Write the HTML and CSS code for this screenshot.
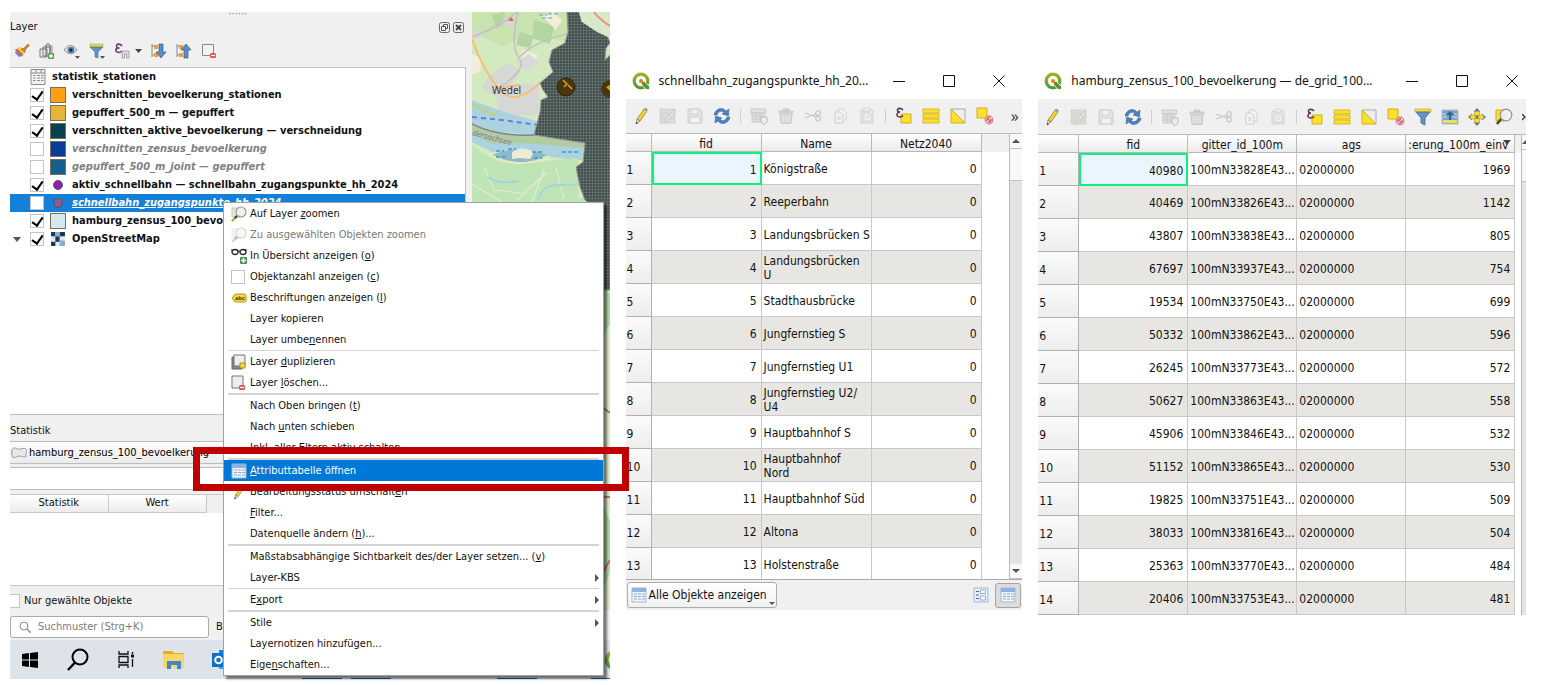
FILE: index.html
```html
<!DOCTYPE html>
<html lang="de">
<head>
<meta charset="utf-8">
<title>QGIS – Attributtabelle öffnen</title>
<link rel="stylesheet" href="styles.css">
</head>
<body>
<svg class="sprite" aria-hidden="true">
  <defs>
    <pattern id="mesh" width="3" height="3" patternUnits="userSpaceOnUse"><rect width="3" height="3" fill="#434f4e"/><path d="M0 0H3M0 0V3" stroke="#73847c" stroke-width="1"/></pattern>
    <linearGradient id="qg" x1="0" y1="0" x2="0" y2="1"><stop offset="0" stop-color="#93b72a"/><stop offset="1" stop-color="#589632"/></linearGradient>
  </defs>
  <symbol id="qgis" viewBox="0 0 18 18"><circle cx="9" cy="9" r="6.800" fill="none" stroke="url(#qg)" stroke-width="3.200"/><path d="M9.500 9.500h3l5 5v3h-3.500l-4.500-5z" fill="#589632" stroke="#fff" stroke-width=".8"/><circle cx="9" cy="9" r="2" fill="#ee7913"/></symbol>
  <symbol id="pencil" viewBox="0 0 18 18"><path d="M5 12 12 2l3 2-7 10z" fill="#efd33c" stroke="#98842a" stroke-width=".8"/><path d="M12 2l1-1.500 3 2-1 1.500z" fill="#999"/><path d="M5 12l3 2-4 3z" fill="#eee0b0" stroke="#777" stroke-width=".7"/><path d="M4 17l.5-2 1.500 1z" fill="#222"/></symbol>
  <symbol id="multi" viewBox="0 0 18 18"><path d="M1 2h15v4H1zM1 7h15v4H1zM1 12h15v4H1z" fill="#d5d5d0" stroke="#c2c2bc" stroke-width=".8"/><path d="M6 14 14 3l2 2-8 10-3 1z" fill="#e5e5e0" stroke="#bbb"/></symbol>
  <symbol id="save" viewBox="0 0 18 18"><path d="M2 2h12l2 2v12H2z" fill="#dedede" stroke="#c4c4c4"/><path d="M5 2h7v5H5zM4 10h10v6H4z" fill="#f2f2f2" stroke="#c8c8c8"/></symbol>
  <symbol id="refresh" viewBox="0 0 18 18"><path d="M1 8C2 2 9-1 13 4l3-2-.5 7L9 7l2-1.500C8 3 5 5 4 8zM17 10c-1 6-8 9-12 4l-3 2 .5-7L9 11l-2 1.500c3 2.500 6 .5 7-2.500z" fill="#4d80bd" stroke="#31639c" stroke-width=".5"/></symbol>
  <symbol id="newcol" viewBox="0 0 18 18"><path d="M1 2h15v4H1zM2 6h12v9H2zM2 9h12M2 12h12M6 6v9M10 6v9" fill="#ddd" stroke="#bbb" stroke-width=".9"/><path d="M11 10h6v5l-3 3-3-3z" fill="#eee" stroke="#aaa"/></symbol>
  <symbol id="trash" viewBox="0 0 18 18"><path d="M2 4h14v2H2zM6 2h6v2H6zM3 7h12l-1 9.500H4z" fill="#d2cccb" stroke="#bdb7b6" stroke-width=".8"/><path d="M6 8v7M9 8v7M12 8v7" stroke="#eee"/></symbol>
  <symbol id="cut" viewBox="0 0 18 18"><path d="M1 6l11 4M1 11l11-4" stroke="#bdbdbd" stroke-width="1.300"/><circle cx="14" cy="6" r="2.300" fill="none" stroke="#bdbdbd" stroke-width="1.300"/><circle cx="14" cy="11.500" r="2.300" fill="none" stroke="#bdbdbd" stroke-width="1.300"/></symbol>
  <symbol id="copy" viewBox="0 0 18 18"><path d="M7 2h5l3 3v8H7z" fill="#f3f3f3" stroke="#ccc"/><path d="M4 5h5l3 3v8H4zM6 10h4M6 12h4" fill="#f3f3f3" stroke="#c4c4c4"/></symbol>
  <symbol id="paste" viewBox="0 0 18 18"><path d="M3 3h12v13H3z" fill="#e0e0e0" stroke="#ccc"/><path d="M6 1h6v3H6zM6 6h4l3 3v5H6zM8 9h3M8 11h3" fill="#f3f3f3" stroke="#ccc"/></symbol>
  <symbol id="exprsel" viewBox="0 0 18 18"><path d="M6 7h10v9H6z" fill="#fbe12c" stroke="#cfae1e"/><path d="M8 3C6 .5 2 1 2.500 3.500c0 1 1.500 1.500 2.500 1.500C3.500 5 1.500 6.500 2 8.500c1 2 4.500 2 6 0" fill="none" stroke="#5d3365" stroke-width="1.600"/></symbol>
  <symbol id="selall" viewBox="0 0 18 18"><path d="M1 2h16v4H1zM1 7h16v4H1zM1 12h16v4H1z" fill="#fbe12c" stroke="#cfae1e" stroke-width=".8"/></symbol>
  <symbol id="invert" viewBox="0 0 18 18"><path d="M2 2h14v14z" fill="#eee" stroke="#aaa"/><path d="M2 2v14h14z" fill="#fbe12c" stroke="#cfae1e"/></symbol>
  <symbol id="desel" viewBox="0 0 18 18"><path d="M1 1h10v10H1z" fill="#fbe12c" stroke="#cfae1e"/><circle cx="13" cy="13" r="4.400" fill="#df6266"/><circle cx="13" cy="13" r="3.200" fill="none" stroke="#f5d0d0" stroke-width=".8"/><path d="M10.500 15.500l5-5" stroke="#fff"/></symbol>
  <symbol id="filter" viewBox="0 0 18 18"><path d="M1 1h16v3H1z" fill="#f0dd4b" stroke="#c6ad2b" stroke-width=".7"/><path d="M2 4h14l-5 6v7l-4-2v-5z" fill="#6592c5" stroke="#41699c" stroke-width=".8"/></symbol>
  <symbol id="moveup" viewBox="0 0 18 18"><path d="M1 2h16v14H1z" fill="#7aa1cc" stroke="#b1bfd0"/><path d="M2 12h14v3H2z" fill="#efdd52"/><path d="M9 3l4 4h-3v5H8V7H5z" fill="#345f91"/><path d="M2 6h3M13 6h3M2 9h4M12 9h4" stroke="#d7e4f2"/></symbol>
  <symbol id="pansel" viewBox="0 0 18 18"><path d="M9 0l3.500 4h-7zM9 18l3.500-4h-7zM0 9l4-3.500v7zM18 9l-4-3.500v7zM7 7h4v4H7z" fill="#4d7cb4"/><path d="M6.500 3.500h5v4h-5zM10.500 7h5v4h-5zM2.500 7h5v4h-5zM6.500 10.500h5v4h-5z" fill="#f6df37" stroke="#b79f22" stroke-width=".6"/></symbol>
  <symbol id="zoomsel" viewBox="0 0 18 18"><path d="M1 2h8v11H1z" fill="#f6df37" stroke="#cfae1e"/><path d="M6 11l-4 5" stroke="#444" stroke-width="2.500"/><circle cx="11" cy="7" r="5.800" fill="#f1f1ee" fill-opacity=".9" stroke="#909090" stroke-width="1.200"/></symbol>
  <symbol id="zoomlayer" viewBox="0 0 16 16"><path d="M1 2h8v9H1z" fill="#e6e6e0" stroke="#c9c9c2"/><path d="M6 10l-5 5" stroke="#c9a23a" stroke-width="2.400"/><path d="M6 10l-2 2" stroke="#444" stroke-width="2.400"/><circle cx="10" cy="6" r="5" fill="#efefec" fill-opacity=".9" stroke="#999" stroke-width="1.200"/></symbol>
  <symbol id="table" viewBox="0 0 16 16"><path d="M1 1h14v14H1z" fill="#eef4fa" stroke="#9db9d8"/><path d="M1 1h14v4H1z" fill="#8db4dc"/><path d="M3 7h3M3 9.500h3M3 12h3M7 7h3M7 9.500h3M7 12h3M11 7h3M11 9.500h3M11 12h3" stroke="#8caccd" stroke-width="1.200"/></symbol>
  <symbol id="tablegrey" viewBox="0 0 16 16"><path d="M1 .5h14v15H1z" fill="#f2f2f2" stroke="#8c8c8c"/><path d="M1 4h14M6 1v3M11 1v3" stroke="#8c8c8c"/><path d="M3 6.500h2.500M3 9h2.500M3 11.500h2.500M7 6.500h3M7 9h3M7 11.500h3M11 6.500h2.500M11 9h2.500M11 11.500h2.500" stroke="#8c8c8c"/></symbol>
  <symbol id="form" viewBox="0 0 16 16"><path d="M1 1h14v14H1z" fill="#e6eef7" stroke="#9db9d8"/><path d="M3 4.500h3M3 8h3M3 11.500h3" stroke="#5a6a7c"/><path d="M7.500 3h5v3.500h-5zM7.500 9h5v4h-5z" fill="#fff" stroke="#8fb2d9"/></symbol>
</svg>
<main class="page">
  <section class="shot">
    <div class="workspace">
      <div class="docks">
        <div class="dockhead">
          <div class="grip">······</div>
          <div class="docktitle"><h2>Layer</h2>
            <button class="dockbtn" aria-label="Abdocken"><svg viewBox="0 0 11 11"><rect x=".5" y=".5" width="10" height="10" rx="2" fill="none" stroke="#666"/><path d="M4.500 4V2.500h4v4H7M2.500 4.500h4v4h-4z" fill="none" stroke="#555"/></svg></button>
            <button class="dockbtn" aria-label="Schließen"><svg viewBox="0 0 11 11"><rect x=".5" y=".5" width="10" height="10" rx="2" fill="none" stroke="#666"/><path d="M3 3l5 5M8 3l-5 5" stroke="#444" stroke-width="1.800"/></svg></button>
          </div>
          <div class="layertools">
            <button aria-label="Layergestaltung"><svg viewBox="0 0 16 16"><path d="M1 7l5-3 5 5-3 4z" fill="#e8a33c"/><path d="M1 7l2-1 6 6-1 1z" fill="#e24b4b"/><path d="M3 5.500L6 4l5 5-1 2z" fill="#f5d040"/><path d="M1 10l4 4 3-1-6-5z" fill="#5a8fd0"/><path d="M7 6l3-1 4-4 1.500 1.500-4 4-.5 3z" fill="#c8843a" stroke="#99612a" stroke-width=".5"/></svg></button>
            <button aria-label="Gruppe hinzufügen"><svg viewBox="0 0 16 16"><path d="M1 6h7v8H1zM4 4h7v9H4z" fill="#eee" stroke="#777"/><path d="M7 12V3c0-3 4-3 4 0v7" fill="none" stroke="#4b6a80"/><path d="M6 3h7v9H6" fill="none" stroke="#888"/><rect x="9" y="10" width="6" height="6" rx="1" fill="#5d9b66"/><path d="M12 11v4M10 13h4" stroke="#fff" stroke-width="1.400"/></svg></button>
            <button aria-label="Kartenthemen"><svg viewBox="0 0 16 16"><path d="M0 7c4-6 9-6 13 0-4 5-9 5-13 0z" fill="#d9dde0" stroke="#999"/><circle cx="7" cy="7" r="3.300" fill="#4b7eb5"/><circle cx="7" cy="7" r="1.500" fill="#222"/><path d="M11 13h5l-2.500 3z" fill="#555"/></svg></button>
            <button aria-label="Legende filtern"><svg viewBox="0 0 16 16"><path d="M1 1h13v3H1z" fill="#e8dc4b" stroke="#b9a736" stroke-width=".6"/><path d="M1 4h13l-5 5v6l-3-1V9z" fill="#6592c5" stroke="#41699c" stroke-width=".6"/><path d="M11 13h5l-2.500 3z" fill="#555"/></svg></button>
            <button class="wide" aria-label="Nach Ausdruck filtern"><svg viewBox="0 0 28 16"><path d="M8 3C6 0 2 1 2.500 3c0 1.500 1.500 2 3 2C3 5 1 6 2 8s4 2 6 0" fill="none" stroke="#6a3c74" stroke-width="1.600"/><path d="M8 8h7v7h-2.500v-4h-2v4H8z" fill="#ddd" stroke="#999" stroke-width=".8"/><path d="M21 6h7l-3.500 4z" fill="#444"/></svg></button>
            <button aria-label="Alle ausklappen"><svg viewBox="0 0 16 16"><path d="M1 1v13M1 3h3M1 12h3" stroke="#888"/><rect x="3" y="2" width="4" height="4" fill="#f0a030"/><rect x="3" y="10" width="4" height="4" fill="#f0a030"/><path d="M8 1h4v8h3l-5 6-5-6h3z" fill="#5b8cc2" stroke="#345f91" stroke-width=".7"/></svg></button>
            <button aria-label="Alle einklappen"><svg viewBox="0 0 16 16"><path d="M1 1v13M1 3h3M1 12h3" stroke="#888"/><rect x="3" y="2" width="4" height="4" fill="#f0a030"/><rect x="3" y="10" width="4" height="4" fill="#f0a030"/><path d="M8 15h4V7h3l-5-6-5 6h3z" fill="#5b8cc2" stroke="#345f91" stroke-width=".7"/></svg></button>
            <button aria-label="Layer löschen"><svg viewBox="0 0 16 16"><path d="M1.500 1.500h11v11h-11z" fill="#f1f1f1" stroke="#888"/><rect x="9" y="10" width="6" height="5" rx="1.500" fill="#e2505a"/><path d="M10 12.500h4" stroke="#fff" stroke-width="1.200"/></svg></button>
          </div>
        </div>
        <ul class="layers">
          <li class="tablelayer"><svg class="sw"><use href="#tablegrey"/></svg><span>statistik_stationen</span></li>
          <li><input type="checkbox" id="l1" checked><i class="sw" style="background:#ff9e17"></i><label for="l1">verschnitten_bevoelkerung_stationen</label></li>
          <li><input type="checkbox" id="l2" checked><i class="sw" style="background:#e5b636"></i><label for="l2">gepuffert_500_m — gepuffert</label></li>
          <li><input type="checkbox" id="l3" checked><i class="sw" style="background:#08424f"></i><label for="l3">verschnitten_aktive_bevoelkerung — verschneidung</label></li>
          <li class="off"><input type="checkbox" id="l4"><i class="sw" style="background:#0a3c9a"></i><label for="l4">verschnitten_zensus_bevoelkerung</label></li>
          <li class="off"><input type="checkbox" id="l5"><i class="sw" style="background:#155f89"></i><label for="l5">gepuffert_500_m_joint — gepuffert</label></li>
          <li><input type="checkbox" id="l6" checked><i class="sw dot" style="background:#8f1fb3"></i><label for="l6">aktiv_schnellbahn — schnellbahn_zugangspunkte_hh_2024</label></li>
          <li class="selected"><input type="checkbox" id="l7"><i class="sw dot" style="background:#8d5a99"></i><label for="l7">schnellbahn_zugangspunkte_hh_2024</label></li>
          <li><input type="checkbox" id="l8" checked><i class="sw" style="background:#d5e8eb"></i><label for="l8">hamburg_zensus_100_bevoelkerung</label></li>
          <li class="group"><svg class="twist" viewBox="0 0 8 5"><path d="M0 0h8L4 5z" fill="#555"/></svg><input type="checkbox" id="l9" checked><svg class="sw" viewBox="0 0 15 15"><path d="M1 1h13v13H1z" fill="#dfe6ee"/><path d="M1 1h4v4H1zM9 1h5v4H9zM5 5h4v5H5zM1 10h4v4H1z" fill="#1d3557"/><path d="M5 1h4v4H5zM9 9h5v5H9z" fill="#8faccb"/></svg><label for="l9">OpenStreetMap</label></li>
        </ul>
        <div class="stats">
          <h2>Statistik</h2>
          <div class="combo"><svg viewBox="0 0 16 12"><path d="M1 3c1-3 4-2 6-1s6-2 8 0-1 5 0 7-5 0-7 0-4 3-6 1-1-4-1-7z" fill="#e7e7e7" stroke="#999"/></svg><select aria-label="Layer für Statistik"><option>hamburg_zensus_100_bevoelkerung — de_grid_100m</option></select></div>
          <input class="expr" type="text" aria-label="Ausdruck">
          <table class="statgrid"><thead><tr><th>Statistik</th><th>Wert</th></tr></thead></table>
          <div class="only"><input type="checkbox" id="only"><label for="only">Nur gewählte Objekte</label></div>
        </div>
      </div>
      <div class="splitter"></div>
      <svg class="map" viewBox="0 0 138 598" preserveAspectRatio="xMinYMin slice">
        <rect width="138" height="598" fill="#d3e9bf"/>
        <path d="M0 0h95v31L60 20 30 34 0 20z" fill="#c8e3ae"/>
        <path d="M20 3l12-3 4 12-12 4zM48 20l14 4-4 12-14-3zM62 8l20 6-4 18-18-6z" fill="#b3d5a0"/>
        <path d="M70 4l12-4 8 8-6 10zM50 37l16 6-3 10-16-5zM0 42l10 4-2 14-8 2z" fill="#f0eed8"/>
        <path d="M32 5l13 2-3 8-12-2zM0 17l10 3-3 7-7-2zM22 60l14-9 12 8-8 13 22 0 5 6-1 24-16 1-22 2-4-20-14-9 6-10z" fill="#d7d7d5"/>
        <path d="M43 50l14-8 10 8-12 9z" fill="#d9d9d8"/>
        <path d="M0 25Q18 18 28 12T45 0M46 0Q38 35 47 46T28 75M95 22Q60 30 47 46" fill="none" stroke="#c5bfc4" stroke-width="1.500"/>
        <path d="M0 27Q10 56 26 76T68 71M28 76l20-3" fill="none" stroke="#f6bd76" stroke-width="2"/>
        <path d="M36 9l3-4 3 4z" fill="#d17238"/>
        <path d="M67 3h8M76 2h10M70 6h12" stroke="#5aa3d8" stroke-width="1" stroke-dasharray="4 2"/>
        <path d="M0 88Q25 98 46 104L68 110 62 123 25 120 0 112z" fill="#aad3df"/>
        <path d="M0 92Q14 100 24 104" stroke="#b8d39a" stroke-width="4" fill="none"/>
        <path d="M0 105l30 3 36 5" fill="none" stroke="#6d79e8" stroke-width="2" stroke-dasharray="5 4"/>
        <path d="M0 112Q30 127 60 122L112 131 110 148Q80 146 66 142T20 140L0 130z" fill="#aad3df"/>
        <path d="M0 112Q26 125 62 123l50 8v5l-35-3-30-2L20 132 0 122z" fill="#b0cda0"/>
        <path d="M0 112Q26 125 62 123" fill="none" stroke="#84828b" stroke-width="1.500"/>
        <path d="M20 143Q45 132 75 143 60 153 32 149z" fill="#8eb9c8"/><path d="M40 140q10-7 22 0l-4 7-10-1-8 1z" fill="#eeead5"/>
        <path d="M15 140Q40 158 76 147" fill="none" stroke="#e8e9c6" stroke-width="2"/>
        <path d="M24 139h8M36 137h8M60 140h10M24 145h10M62 146h8M90 140h18" stroke="#4598cf" stroke-width="1.500" stroke-dasharray="4 2"/>
        <path d="M0 133Q25 155 50 152t56-6v40h32v24H0z" fill="#bfe4b5"/>
        <path d="M12 155l10 23 28 3M0 172l30 18M45 188l30-28M60 190l12-33M84 156l8 30" fill="none" stroke="#e0edd0" stroke-width="1.200"/>
        <path d="M15 165q12 8 32 4M66 188q4-16 24-15t18-5" fill="none" stroke="#a0d4db" stroke-width="1.800"/>
        <path d="M0 260h138v338H0z" fill="#d9ebca"/><path d="M128 272l10 10v30l-6 10zM130 490l8 20v50l-8 20z" fill="#b0d9a0"/><path d="M128 485h10M130 395l8 6M130 562l8-14" stroke="#d2637b" stroke-width="2"/>
        <path d="M95 0 96 20 93 31 80 38 77 50 81 60 68 71 71 78 76 85 69 88 68 100 62 123 113 131 111 150 104 155 108 175 113 188 123 196V278H138V43L133 48 134 36 138 31 135 23 125 18 118 13 110 10 107 0z" fill="url(#mesh)" stroke="#9a8d98"/>
        <path d="M107 0 110 10 125 20 138 26V0z" fill="#d8e8c8"/><path d="M122 0q6 8 16 14" fill="none" stroke="#ee8f82" stroke-width="2"/>
        <circle cx="94" cy="75" r="9" fill="#4b360f" stroke="#2b220f"/><path d="M91 68l4 4-3 3M96 73l4 4" stroke="#e0a020" stroke-width="1.500" fill="none"/>
        <path d="M138 68a9 9 0 0 0 0 18z" fill="#4b360f"/><path d="M134 75l4-2v6z" fill="#e0a020"/>
        <text x="20" y="82" class="town">Wedel</text>
        <text x="0" y="123" class="region" transform="rotate(15 0 123)">dersachsen</text>
      </svg>
    </div>
    <div class="statusbar"><label class="search"><svg viewBox="0 0 12 12"><circle cx="5" cy="5" r="4" fill="none" stroke="#888"/><path d="M8 8l4 4" stroke="#888" stroke-width="1.300"/></svg><input type="search" placeholder="Suchmuster (Strg+K)" aria-label="Suchmuster"></label><span>B</span></div>
    <div class="taskbar">
      <button aria-label="Start"><svg viewBox="0 0 24 24"><path d="M4 6l7-1v6.500H4zM12 5l8-1v7.500h-8zM4 12.500h7V19l-7-1zM12 12.500h8V20l-8-1z" fill="#000"/></svg></button>
      <button aria-label="Suche"><svg viewBox="0 0 24 24"><circle cx="14" cy="9" r="7.500" fill="none" stroke="#000" stroke-width="2"/><path d="M9 14.500 2 22" stroke="#000" stroke-width="2.400"/></svg></button>
      <button aria-label="Aktive Anwendungen"><svg viewBox="0 0 24 24"><path d="M5 3v3h9V3M5 20v-3h9v3M5 8.500h9v6H5zM18.500 4v2M18.500 11v8" fill="none" stroke="#111" stroke-width="1.300"/><path d="M17 6.500h3v3h-3z" fill="#111"/></svg></button>
      <button aria-label="Explorer"><svg viewBox="0 0 24 24"><path d="M1 3h9l2 2h10v15H1z" fill="#e9a820"/><path d="M1 6h21v14H1z" fill="#fbd663"/><path d="M5 13h14v8h-4v-4h-6v4H5z" fill="#3b8ad0"/></svg></button>
      <button aria-label="Outlook"><svg viewBox="0 0 24 24"><path d="M9 2h12v16H9z" fill="#1a86d9"/><path d="M9 12h14v9H9z" fill="#38aee8"/><path d="M2 5h13v14H2z" fill="#0b72c8"/><circle cx="8.500" cy="12" r="3.300" fill="none" stroke="#fff" stroke-width="2"/></svg></button>
      <div class="running"><i></i><i></i><i></i><i></i></div>
      <svg class="taskqgis"><use href="#qgis"/></svg>
    </div>
    <ul class="menu" role="menu">
      <li><svg><use href="#zoomlayer"/></svg><span>Auf Layer <u>z</u>oomen</span></li>
      <li class="disabled"><svg><use href="#zoomlayer"/></svg><span>Zu aus<u>g</u>ewählten Objekten zoomen</span></li>
      <li><svg viewBox="0 0 16 16"><path d="M0 2h2M14 2h2" stroke="#222"/><ellipse cx="4" cy="4" rx="3" ry="2.500" fill="none" stroke="#222" stroke-width="1.300"/><ellipse cx="12" cy="4" rx="3" ry="2.500" fill="none" stroke="#222" stroke-width="1.300"/><path d="M7 3h2" stroke="#222"/><rect x="9" y="9" width="7" height="7" rx="1" fill="#4c9058"/><path d="M12.500 10v5M10 12.500h5" stroke="#fff" stroke-width="1.500"/></svg><span>In Übersicht anzeigen (<u>o</u>)</span></li>
      <li><input type="checkbox" id="m1"><label for="m1">Objektanzahl anzeigen (<u>c</u>)</label></li>
      <li><svg viewBox="0 0 16 16"><path d="M1 8l3-4h10l1 1v6l-1 1H4z" fill="#f2d83a" stroke="#b69d28"/><text x="4" y="10" class="abc">abc</text></svg><span>Beschriftungen anzeigen (<u>l</u>)</span></li>
      <li><span>Layer kopieren</span></li>
      <li><span>Layer umbe<u>n</u>ennen</span></li>
      <li class="sep thin" role="separator"></li>
      <li><svg viewBox="0 0 16 16"><path d="M1 3h10v12H1z" fill="#888" stroke="#666"/><path d="M3 1h11v11H3z" fill="#eee" stroke="#777"/><path d="M9 9h5v5H9z" fill="#f2d83a" stroke="#a78f28"/></svg><span>Layer <u>d</u>uplizieren</span></li>
      <li><svg viewBox="0 0 16 16"><path d="M1 1h11v12H1z" fill="#eee" stroke="#777"/><rect x="8" y="10" width="6" height="5" rx="1.500" fill="#e2505a"/><path d="M9 12.500h4" stroke="#fff" stroke-width="1.200"/></svg><span>Layer <u>l</u>öschen...</span></li>
      <li class="sep" role="separator"></li>
      <li><span>Nach Oben bringen (<u>t</u>)</span></li>
      <li><span>Nach <u>u</u>nten schieben</span></li>
      <li><span>Inkl. aller Eltern aktiv schalten</span></li>
      <li class="sep" role="separator"></li>
      <li class="active"><svg><use href="#table"/></svg><span><u>A</u>ttributtabelle öffnen</span></li>
      <li><svg><use href="#pencil"/></svg><span>Bearbeitungsstatus umschalt<u>e</u>n</span></li>
      <li><span><u>F</u>ilter...</span></li>
      <li><span>Datenquelle ändern (<u>h</u>)...</span></li>
      <li class="sep" role="separator"></li>
      <li><span>Maßstabsabhängige Sichtbarkeit des/der Layer setzen... (<u>v</u>)</span></li>
      <li class="sub"><span>Layer-KBS</span></li>
      <li class="sep thin" role="separator"></li>
      <li class="sub"><span>E<u>x</u>port</span></li>
      <li class="sep" role="separator"></li>
      <li class="sub"><span>Stile</span></li>
      <li><span>Layernotizen hinzufügen...</span></li>
      <li><span>Eige<u>n</u>schaften...</span></li>
    </ul>
    <div class="marker"></div>
  </section>

  <section class="window first">
    <header class="titlebar"><svg class="logo"><use href="#qgis"/></svg><h1>schnellbahn_zugangspunkte_hh_20...</h1>
      <button aria-label="Minimieren"><svg viewBox="0 0 12 12"><path d="M0 6.500h12" stroke="#111"/></svg></button><button aria-label="Maximieren"><svg viewBox="0 0 12 12"><path d="M.5.5h11v11H.5z" fill="none" stroke="#111"/></svg></button><button aria-label="Schließen"><svg viewBox="0 0 12 12"><path d="M.5.5l11 11M11.500.5l-11 11" stroke="#111"/></svg></button></header>
    <div class="toolbar">
      <button aria-label="Bearbeiten"><svg><use href="#pencil"/></svg></button><button disabled aria-label="Mehrfachbearbeitung"><svg><use href="#multi"/></svg></button><button disabled aria-label="Speichern"><svg><use href="#save"/></svg></button><button aria-label="Neu laden"><svg><use href="#refresh"/></svg></button><i></i>
      <button disabled aria-label="Objekt hinzufügen"><svg><use href="#newcol"/></svg></button><button disabled aria-label="Löschen"><svg><use href="#trash"/></svg></button><button disabled aria-label="Ausschneiden"><svg><use href="#cut"/></svg></button><button disabled aria-label="Kopieren"><svg><use href="#copy"/></svg></button><button disabled aria-label="Einfügen"><svg><use href="#paste"/></svg></button><i></i>
      <button aria-label="Nach Ausdruck wählen"><svg><use href="#exprsel"/></svg></button><button aria-label="Alles wählen"><svg><use href="#selall"/></svg></button><button aria-label="Auswahl umkehren"><svg><use href="#invert"/></svg></button><button aria-label="Auswahl aufheben"><svg><use href="#desel"/></svg></button>
      <button class="more" aria-label="Mehr">»</button>
    </div>
    <div class="gridarea">
      <table class="grid">
        <colgroup><col class="n1"><col class="c"><col class="c"><col class="c"><col></colgroup>
        <thead><tr><th></th><th>fid</th><th>Name</th><th>Netz2040</th><td class="rest"></td></tr></thead>
        <tbody>
          <tr><th>1</th><td class="num cur">1</td><td>Königstraße</td><td class="num">0</td><td class="rest"></td></tr>
          <tr><th>2</th><td class="num">2</td><td>Reeperbahn</td><td class="num">0</td><td class="rest"></td></tr>
          <tr><th>3</th><td class="num">3</td><td>Landungsbrücken S</td><td class="num">0</td><td class="rest"></td></tr>
          <tr><th>4</th><td class="num">4</td><td>Landungsbrücken<br>U</td><td class="num">0</td><td class="rest"></td></tr>
          <tr><th>5</th><td class="num">5</td><td>Stadthausbrücke</td><td class="num">0</td><td class="rest"></td></tr>
          <tr><th>6</th><td class="num">6</td><td>Jungfernstieg S</td><td class="num">0</td><td class="rest"></td></tr>
          <tr><th>7</th><td class="num">7</td><td>Jungfernstieg U1</td><td class="num">0</td><td class="rest"></td></tr>
          <tr><th>8</th><td class="num">8</td><td>Jungfernstieg U2/<br>U4</td><td class="num">0</td><td class="rest"></td></tr>
          <tr><th>9</th><td class="num">9</td><td>Hauptbahnhof S</td><td class="num">0</td><td class="rest"></td></tr>
          <tr><th>10</th><td class="num">10</td><td>Hauptbahnhof<br>Nord</td><td class="num">0</td><td class="rest"></td></tr>
          <tr><th>11</th><td class="num">11</td><td>Hauptbahnhof Süd</td><td class="num">0</td><td class="rest"></td></tr>
          <tr><th>12</th><td class="num">12</td><td>Altona</td><td class="num">0</td><td class="rest"></td></tr>
          <tr><th>13</th><td class="num">13</td><td>Holstenstraße</td><td class="num">0</td><td class="rest"></td></tr>
        </tbody>
      </table>
      <div class="scroll"><span class="up"></span><span class="thumb"></span><span class="down"></span></div>
    </div>
    <footer class="viewbar"><button class="showall"><svg><use href="#table"/></svg>Alle Objekte anzeigen<span></span></button><button class="view" aria-label="Formularansicht"><svg><use href="#form"/></svg></button><button class="view on" aria-label="Tabellenansicht"><svg><use href="#table"/></svg></button></footer>
  </section>

  <section class="window second">
    <header class="titlebar"><svg class="logo"><use href="#qgis"/></svg><h1>hamburg_zensus_100_bevoelkerung — de_grid_100...</h1>
      <button aria-label="Minimieren"><svg viewBox="0 0 12 12"><path d="M0 6.500h12" stroke="#111"/></svg></button><button aria-label="Maximieren"><svg viewBox="0 0 12 12"><path d="M.5.5h11v11H.5z" fill="none" stroke="#111"/></svg></button><button aria-label="Schließen"><svg viewBox="0 0 12 12"><path d="M.5.5l11 11M11.500.5l-11 11" stroke="#111"/></svg></button></header>
    <div class="toolbar">
      <button aria-label="Bearbeiten"><svg><use href="#pencil"/></svg></button><button disabled aria-label="Mehrfachbearbeitung"><svg><use href="#multi"/></svg></button><button disabled aria-label="Speichern"><svg><use href="#save"/></svg></button><button aria-label="Neu laden"><svg><use href="#refresh"/></svg></button><i></i>
      <button disabled aria-label="Objekt hinzufügen"><svg><use href="#newcol"/></svg></button><button disabled aria-label="Löschen"><svg><use href="#trash"/></svg></button><button disabled aria-label="Ausschneiden"><svg><use href="#cut"/></svg></button><button disabled aria-label="Kopieren"><svg><use href="#copy"/></svg></button><button disabled aria-label="Einfügen"><svg><use href="#paste"/></svg></button><i></i>
      <button aria-label="Nach Ausdruck wählen"><svg><use href="#exprsel"/></svg></button><button aria-label="Alles wählen"><svg><use href="#selall"/></svg></button><button aria-label="Auswahl umkehren"><svg><use href="#invert"/></svg></button><button aria-label="Auswahl aufheben"><svg><use href="#desel"/></svg></button><button aria-label="Filtern"><svg><use href="#filter"/></svg></button><button aria-label="Auswahl nach oben"><svg><use href="#moveup"/></svg></button><button aria-label="Zur Auswahl verschieben"><svg><use href="#pansel"/></svg></button><button aria-label="Zur Auswahl zoomen"><svg><use href="#zoomsel"/></svg></button>
      <button class="overflow" aria-label="Mehr"><svg viewBox="0 0 4 8"><path d="M0 1l3 3-3 3" fill="none" stroke="#333" stroke-width="1.300"/></svg></button>
    </div>
    <div class="gridarea">
      <table class="grid">
        <colgroup><col class="n2"><col class="c"><col class="c"><col class="c"><col class="c"><col></colgroup>
        <thead><tr><th></th><th>fid</th><th>gitter_id_100m</th><th>ags</th><th class="sorted"><span>:erung_100m_einv</span></th><td class="rest"></td></tr></thead>
        <tbody>
          <tr><th>1</th><td class="num cur">40980</td><td>100mN33828E43...</td><td>02000000</td><td class="num">1969</td><td class="rest"></td></tr>
          <tr><th>2</th><td class="num">40469</td><td>100mN33826E43...</td><td>02000000</td><td class="num">1142</td><td class="rest"></td></tr>
          <tr><th>3</th><td class="num">43807</td><td>100mN33838E43...</td><td>02000000</td><td class="num">805</td><td class="rest"></td></tr>
          <tr><th>4</th><td class="num">67697</td><td>100mN33937E43...</td><td>02000000</td><td class="num">754</td><td class="rest"></td></tr>
          <tr><th>5</th><td class="num">19534</td><td>100mN33750E43...</td><td>02000000</td><td class="num">699</td><td class="rest"></td></tr>
          <tr><th>6</th><td class="num">50332</td><td>100mN33862E43...</td><td>02000000</td><td class="num">596</td><td class="rest"></td></tr>
          <tr><th>7</th><td class="num">26245</td><td>100mN33773E43...</td><td>02000000</td><td class="num">572</td><td class="rest"></td></tr>
          <tr><th>8</th><td class="num">50627</td><td>100mN33863E43...</td><td>02000000</td><td class="num">558</td><td class="rest"></td></tr>
          <tr><th>9</th><td class="num">45906</td><td>100mN33846E43...</td><td>02000000</td><td class="num">532</td><td class="rest"></td></tr>
          <tr><th>10</th><td class="num">51152</td><td>100mN33865E43...</td><td>02000000</td><td class="num">530</td><td class="rest"></td></tr>
          <tr><th>11</th><td class="num">19825</td><td>100mN33751E43...</td><td>02000000</td><td class="num">509</td><td class="rest"></td></tr>
          <tr><th>12</th><td class="num">38033</td><td>100mN33816E43...</td><td>02000000</td><td class="num">504</td><td class="rest"></td></tr>
          <tr><th>13</th><td class="num">25363</td><td>100mN33770E43...</td><td>02000000</td><td class="num">484</td><td class="rest"></td></tr>
          <tr><th>14</th><td class="num">20406</td><td>100mN33753E43...</td><td>02000000</td><td class="num">481</td><td class="rest"></td></tr>
        </tbody>
      </table>
      <div class="scroll cutoff"><span class="up"></span><span class="thumb"></span></div>
    </div>
  </section>
</main>
</body>
</html>
```

FILE: styles.css
```css
* { box-sizing: border-box; }
body {
  margin: 0;
  background: #fff;
  color: #111;
  font: 11px/14px "DejaVu Sans Condensed", "Noto Sans", sans-serif;
}
h1, h2, ul { margin: 0; padding: 0; font-size: inherit; font-weight: normal; list-style: none; }
button { border: 0; padding: 0; background: none; font: inherit; color: inherit; }
button svg { display: block; width: 100%; height: 100%; }
.sprite { position: absolute; width: 0; height: 0; }

.page {
  display: grid;
  grid-template-columns: 600fr 397fr 488fr;
  gap: 16px;
  align-items: start;
  padding: 12px 25px 7px 10px;
}

input[type="checkbox"] {
  appearance: none;
  flex: none;
  width: 14px;
  height: 14px;
  margin: 0;
  border: 1px solid #c4c4c4;
  background: #fff;
  display: flex;
  justify-content: center;
}
input[type="checkbox"]:checked::after {
  content: "";
  width: 5px;
  height: 9px;
  border: solid #000;
  border-width: 0 2px 2px 0;
  transform: rotate(35deg);
}

/* QGIS main window */
.shot { position: relative; display: flex; flex-direction: column; background: #f0f0f0; }
.workspace { display: flex; }
.docks { flex: 0 0 76%; display: flex; flex-direction: column; }
.splitter { flex: 0 0 6px; }
.map { flex: 1; min-width: 0; width: 0; height: 598px; display: block; }
.town { font: 10px "Noto Sans", sans-serif; fill: #333; }
.region { font: italic 8px "Noto Sans", sans-serif; fill: #8f6f96; }
.grip { height: 5px; line-height: 3px; text-align: center; color: #888; }
.docktitle { display: flex; align-items: center; gap: 3px; height: 20px; padding-right: 2px; }
.docktitle h2 { flex: 1; }
.dockbtn { width: 11px; height: 11px; }
.layertools { display: flex; gap: 9px; padding: 6px 4px 8px; height: 30px; }
.layertools button { width: 16px; height: 16px; }
.layertools .wide { width: 28px; }
.layers {
  height: 348px;
  border: solid #c0c0c0;
  border-width: 1px 1px 1px 0;
  background: #fff;
  font-weight: bold;
}
.layers li { display: flex; align-items: center; gap: 6px; height: 18px; padding-left: 20px; white-space: nowrap; overflow: hidden; }
.layers .sw { flex: none; width: 16px; height: 16px; border: 1px solid #77705c; }
.layers svg.sw { border: 0; }
.layers .dot { width: 10px; height: 10px; margin: 0 3px; border-radius: 50%; border-color: #555; }
.layers .off { color: #808080; font-style: italic; }
.layers .selected { background: #1480d8; color: #fff; font-style: italic; text-decoration: underline; }
.layers .group { padding-left: 3px; }
.twist { width: 8px; height: 5px; margin-right: 3px; }

.stats { display: flex; flex-direction: column; background: #f0f0f0; }
.stats h2 { height: 26px; line-height: 32px; }
.combo { display: flex; align-items: center; gap: 2px; height: 23px; padding-left: 1px; border: solid #bdbdbd; border-width: 1px 0; background: linear-gradient(#fdfdfd, #ebebeb); }
.combo svg { width: 16px; height: 12px; }
.combo select { appearance: none; flex: 1; min-width: 0; border: 0; background: none; font: inherit; }
.expr { height: 23px; margin: 3px 0 4px; border: solid #bdbdbd; border-width: 1px 0; background: #fff; }
.statgrid { display: block; height: 92px; border-collapse: collapse; border: solid #c8c8c8; border-width: 1px 0; background: #fff; }
.statgrid thead { display: block; background: #f0f0f0; }
.statgrid th { width: 98px; height: 17px; padding: 0; border: solid #c8c8c8; border-width: 0 1px 1px 0; background: linear-gradient(#fff, #ececec); font-weight: normal; }
.only { display: flex; align-items: center; gap: 4px; height: 25px; padding-top: 5px; overflow: hidden; }
.only input { margin-left: -4px; }

.statusbar { display: flex; align-items: center; gap: 7px; height: 29px; padding-top: 2px; }
.search { display: flex; align-items: center; gap: 7px; width: 199px; height: 22px; padding: 0 8px; border: 1px solid #aaa; border-radius: 3px; background: #fff; }
.search svg { flex: none; width: 12px; height: 12px; }
.search input { flex: 1; min-width: 0; border: 0; padding: 0; background: none; font: inherit; }
.search input::placeholder { color: #7b7b7b; }
.taskbar { display: flex; align-items: center; gap: 24px; height: 39px; padding-left: 8px; overflow: hidden; background: #dde3e9; }
.taskbar button { flex: none; width: 24px; height: 24px; }
.running { display: flex; flex: 1; align-self: flex-end; gap: 9px; justify-content: flex-end; margin-right: 0; }
.running i { flex: none; width: 40px; height: 1px; background: #0f65a8; }
.running i:nth-child(3) { margin-left: 97px; }
.running i:nth-child(4) { margin-left: 45px; }
.taskqgis { flex: none; width: 22px; height: 22px; margin: 0 -16px 0 -51px; }

.menu {
  position: absolute;
  left: 213px;
  top: 190px;
  width: 381px;
  border: 1px solid #a0a0a0;
  background: #fff;
  box-shadow: 3px 3px 2px rgba(0, 0, 0, .5);
}
.menu li { display: flex; align-items: center; height: 21px; padding: 0 4px 0 7px; white-space: nowrap; }
.menu svg, .menu input[type="checkbox"] { flex: none; width: 16px; height: 16px; margin-right: -16px; }
.menu input[type="checkbox"] { width: 14px; height: 14px; margin-right: -14px; }
.menu span, .menu label { margin-left: 19px; }
.menu .disabled { color: #787878; }
.menu .disabled svg { opacity: .4; }
.menu .active { background: #0078d7; color: #fff; }
.menu .sep { height: 2px; margin: 0 4px; padding: 0; background: #d5d5d5; }
.menu .thin { height: 1px; }
.menu .sub::after { content: ""; margin-left: auto; border: 4px solid transparent; border-left-color: #555; border-right: 0; }
.abc { font: bold 5px "DejaVu Sans", sans-serif; fill: #333; }
.marker { position: absolute; left: 183px; top: 435px; width: 436px; height: 44px; border: 7px solid #c00000; }

/* attribute table windows */
.window { margin-top: 51px; min-width: 0; }
.titlebar { display: flex; align-items: center; height: 36px; padding-left: 6px; margin-right: -2px; }
.second .titlebar { margin-right: -11px; }
.titlebar .logo { flex: none; width: 18px; height: 18px; margin-right: 9px; }
.titlebar h1 { flex: 1; min-width: 0; overflow: hidden; font: 12px/18px "Noto Sans", "Open Sans", sans-serif; white-space: nowrap; }
.titlebar button { flex: none; width: 50px; height: 12px; padding: 0 19px; }
.titlebar button svg { width: 12px; }
.toolbar { display: flex; align-items: center; gap: 9px; height: 34px; padding-left: 6px; overflow: hidden; background: #f0f0f0; }
.second .toolbar { height: 35px; padding-left: 5px; }
.toolbar button { flex: none; width: 18px; height: 18px; }
.toolbar button:disabled { opacity: .75; }
.toolbar i { flex: none; width: 1px; height: 14px; background: #d0d0d0; }
.toolbar .more { margin-left: auto; width: 15px; font: 16px/16px "Open Sans", sans-serif; color: #333; }
.toolbar .overflow { width: 4px; height: 8px; }

.gridarea { display: flex; overflow: hidden; background: #fff; border-top: 1px solid #bbb; }
.first .gridarea { height: 446px; }
.grid { flex: 1; min-width: 0; width: 0; table-layout: fixed; border-collapse: separate; border-spacing: 0; font-size: 12px; }
.grid .n1 { width: 26px; }
.grid .n2 { width: 41px; }
.grid .c { width: 110px; }
.second .grid .c { width: 109px; }
.grid th, .grid td { padding: 2px 2px 0; overflow: hidden; font-weight: normal; white-space: nowrap; line-height: 14px; border: solid #c8c8c8; border-width: 0 1px 1px 0; }
.grid thead th { height: 18px; background: linear-gradient(#fff, #ebebeb); border-color: #b8b8b8; }
.grid tbody tr { height: 33px; }
.grid tbody th { text-align: left; padding: 3px 0 0 1px; background: linear-gradient(#fbfbfb, #ededed); border-color: #b0b0b0; }
.grid tbody td { height: 33px; }
.grid tbody tr:nth-child(even) td { background: #e7e6e2; }
.grid td.num { text-align: right; padding-right: 4px; }
.grid tbody td.cur { background: #eaf5ff; border: 2px solid #0cf27a; padding-right: 3px; }
.grid thead td.rest { background: #f0f0f0; border: 0; }
.grid tbody tr td.rest { background: #fff; border: 0; }
.grid .sorted { position: relative; text-align: left; }
.grid .sorted span { display: block; }
.grid .sorted::after { content: ""; position: absolute; right: 3px; top: 5px; border: 4px solid transparent; border-top: 5px solid #444; border-bottom: 0; }
.scroll { flex: 0 0 13px; display: flex; flex-direction: column; overflow: hidden; background: #e3e3e3; border-left: 1px solid #bbb; }
.cutoff { flex-basis: 5px; }
.scroll span { flex: none; background: #f8f8f8; border-bottom: 1px solid #c0c0c0; }
.scroll .up, .scroll .down { display: grid; place-items: center; height: 15px; }
.scroll .up::after { content: ""; border: 4px solid transparent; border-bottom-color: #555; border-top: 0; }
.scroll .down::after { content: ""; border: 4px solid transparent; border-top-color: #555; border-bottom: 0; }
.scroll .thumb { height: 32px; }
.scroll .down { margin-top: auto; }

.viewbar { display: flex; align-items: center; gap: 6px; height: 31px; padding: 0 1px; background: #f0f0f0; border-top: 1px solid #aaa; font-size: 12px; }
.viewbar svg { flex: none; width: 16px; height: 16px; }
.showall { display: flex; align-items: center; gap: 2px; height: 26px; padding: 0 1px 0 3px; margin-right: auto; border: 1px solid #adadad; border-radius: 3px; background: linear-gradient(#fff, #f1f1f1); }
.showall span { align-self: flex-end; margin: 0 0 2px; border: 3px solid transparent; border-top-color: #555; border-bottom: 0; }
.view { display: grid; place-items: center; width: 16px; height: 25px; }
.view.on { width: 26px; border: 1px solid #a5a5a5; border-radius: 3px; background: #dcdcdc; }
```
